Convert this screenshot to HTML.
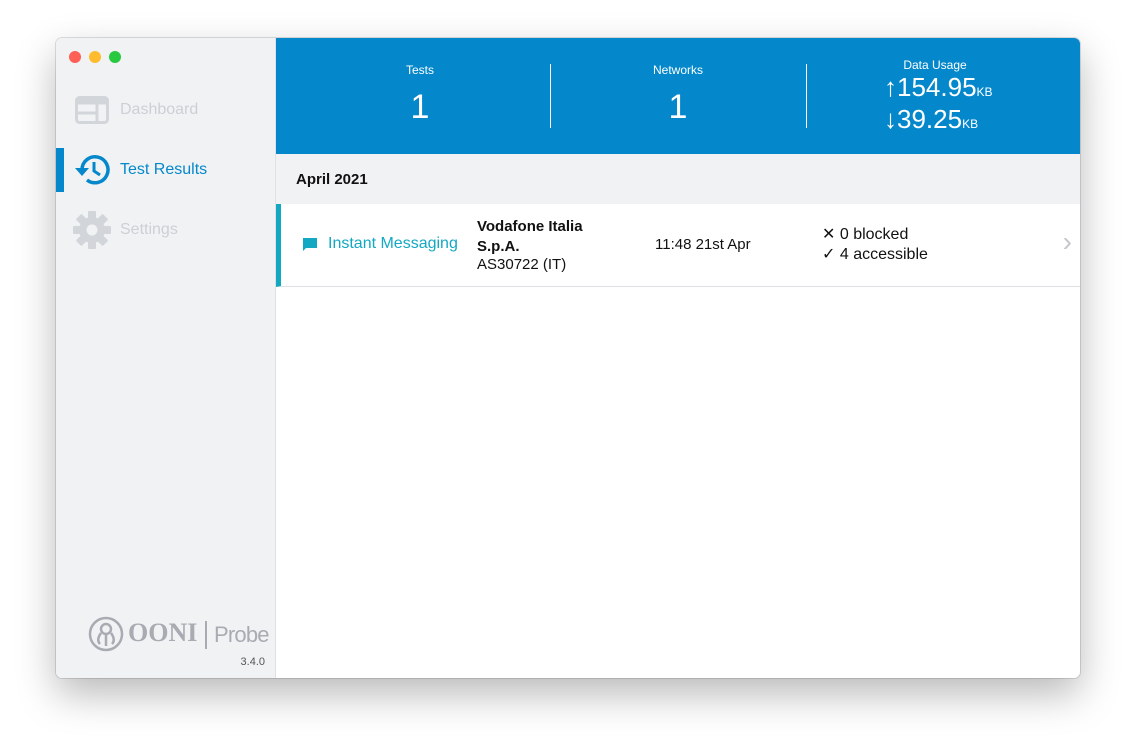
<!DOCTYPE html>
<html><head><meta charset="utf-8"><style>
*{margin:0;padding:0;box-sizing:border-box}
body{width:1136px;height:752px;background:#fff;font-family:"Liberation Sans",sans-serif;position:relative;overflow:hidden}
.win{position:absolute;left:56px;top:38px;width:1024px;height:640px;border-radius:6px;overflow:hidden;box-shadow:0 16px 40px rgba(0,0,0,.28),0 0 0 1px rgba(0,0,0,.12);background:#fff}
.side{position:absolute;left:0;top:0;width:220px;height:640px;background:#f1f2f4;border-right:1px solid #e0e1e4}
.dot{position:absolute;top:13px;width:12px;height:12px;border-radius:50%}
.nav{position:absolute;left:0;height:40px;width:220px;display:flex;align-items:center;font-size:16px}
.nav span{position:absolute;left:64px}
.main{position:absolute;left:220px;top:0;right:0;bottom:0}
.hdr{height:116px;background:#0588cb;color:#fff;position:relative}
.col{position:absolute;top:0;text-align:center}
.lbl{font-size:12px;position:absolute;width:100%}
.big{font-size:34px;font-weight:300;position:absolute;width:100%}
.sep{position:absolute;top:26px;width:1px;height:64px;background:#fff}
.date{height:50px;background:#f1f2f4;font-weight:bold;font-size:15px;padding:17px 0 0 20px;color:#111}
.row{position:absolute;top:166px;left:0;right:0;height:83px;border-bottom:1px solid #dfe0e3;border-left:5px solid #13a8c2;font-size:15px;color:#111}
</style></head><body>
<div class="win">
 <div class="side">
  <div class="dot" style="left:13px;background:#fe5f57"></div>
  <div class="dot" style="left:33px;background:#febc2e"></div>
  <div class="dot" style="left:53px;background:#28c840"></div>
  <div class="nav" style="top:52px;color:#ccd0d5">
   <svg style="position:absolute;left:19px" width="34" height="28" viewBox="0 0 34 28"><rect x="1.5" y="1.5" width="31" height="25" rx="3" fill="none" stroke="#d2d5da" stroke-width="3"/><rect x="1.5" y="1.5" width="31" height="7" fill="#d2d5da"/><line x1="1.5" y1="17" x2="22" y2="17" stroke="#d2d5da" stroke-width="3"/><line x1="22" y1="8" x2="22" y2="26" stroke="#d2d5da" stroke-width="3"/></svg>
   <span>Dashboard</span></div>
  <div style="position:absolute;left:0;top:110px;width:8px;height:44px;background:#0588cb"></div>
  <div class="nav" style="top:112px;color:#0588cb">
   <svg style="position:absolute;left:17px" width="38" height="36" viewBox="0 0 38 36"><path d="M9 18 A13 13 0 1 1 14 28" fill="none" stroke="#0588cb" stroke-width="3.5"/><path d="M2 16 L9 24 L16 16 Z" fill="#0588cb"/><path d="M21 10 V19 L27 23" fill="none" stroke="#0588cb" stroke-width="3"/></svg>
   <span>Test Results</span></div>
  <div class="nav" style="top:172px;color:#ccd0d5">
   <svg style="position:absolute;left:16px" width="40" height="40" viewBox="0 0 40 40"><g fill="#d2d5da"><circle cx="20" cy="20" r="13"/><g><rect x="16" y="1" width="8" height="9" rx="1"/><rect x="16" y="30" width="8" height="9" rx="1"/><rect x="1" y="16" width="9" height="8" rx="1"/><rect x="30" y="16" width="9" height="8" rx="1"/></g><g transform="rotate(45 20 20)"><rect x="16" y="1" width="8" height="9" rx="1"/><rect x="16" y="30" width="8" height="9" rx="1"/><rect x="1" y="16" width="9" height="8" rx="1"/><rect x="30" y="16" width="9" height="8" rx="1"/></g></g><circle cx="20" cy="20" r="5.5" fill="#f1f2f4"/></svg>
   <span>Settings</span></div>
  <svg style="position:absolute;left:32px;top:578px" width="36" height="36" viewBox="0 0 36 36"><circle cx="18" cy="18" r="16" fill="none" stroke="#a8acb2" stroke-width="2.5"/><circle cx="18" cy="13" r="5" fill="none" stroke="#a8acb2" stroke-width="2.5"/><path d="M13 17 Q8 24 12 28 M18 18 V30 M23 17 Q28 24 24 28" fill="none" stroke="#a8acb2" stroke-width="2.5"/></svg>
  <div style="position:absolute;left:72px;top:580px;font-family:'Liberation Serif',serif;font-weight:bold;font-size:26px;color:#a8acb2">OONI</div>
  <div style="position:absolute;left:149px;top:583px;width:2px;height:28px;background:#a8acb2"></div>
  <div style="position:absolute;left:158px;top:584px;font-size:22px;color:#a8acb2;letter-spacing:-.8px">Probe</div>
  <div style="position:absolute;right:10px;top:618px;font-size:11px;color:#555">3.4.0</div>
 </div>
 <div class="main">
  <div class="hdr">
   <div class="col" style="left:0;width:288px"><div class="lbl" style="top:25px">Tests</div><div class="big" style="top:50px">1</div></div>
   <div class="sep" style="left:274px"></div>
   <div class="col" style="left:274px;width:256px"><div class="lbl" style="top:25px">Networks</div><div class="big" style="top:50px">1</div></div>
   <div class="sep" style="left:530px"></div>
   <div class="col" style="left:530px;width:258px"><div class="lbl" style="top:20px">Data Usage</div>
    <div style="position:absolute;left:78px;top:34px;font-size:26px;font-weight:300;white-space:nowrap">↑154.95<span style="font-size:12px">KB</span></div>
    <div style="position:absolute;left:78px;top:66px;font-size:26px;font-weight:300;white-space:nowrap">↓39.25<span style="font-size:12px">KB</span></div></div>
  </div>
  <div class="date">April 2021</div>
  <div class="row">
   <svg style="position:absolute;left:21px;top:33px" width="16" height="15" viewBox="0 0 16 15"><path d="M1 1 H15 V11 H4 L1 14 Z" fill="#13a8c2"/></svg>
   <div style="position:absolute;left:47px;top:31px;color:#13a8c2;font-size:16px">Instant Messaging</div>
   <div style="position:absolute;left:196px;top:13px;font-weight:bold;line-height:20px">Vodafone Italia<br>S.p.A.</div>
   <div style="position:absolute;left:196px;top:52px">AS30722 (IT)</div>
   <div style="position:absolute;left:374px;top:32px">11:48 21st Apr</div>
   <div style="position:absolute;left:541px;top:21px;line-height:20px;font-size:16px">✕ 0 blocked<br>✓ 4 accessible</div>
   <div style="position:absolute;right:8px;top:22px;color:#c4c6ca;font-size:28px">›</div>
  </div>
 </div>
</div>
</body></html>
